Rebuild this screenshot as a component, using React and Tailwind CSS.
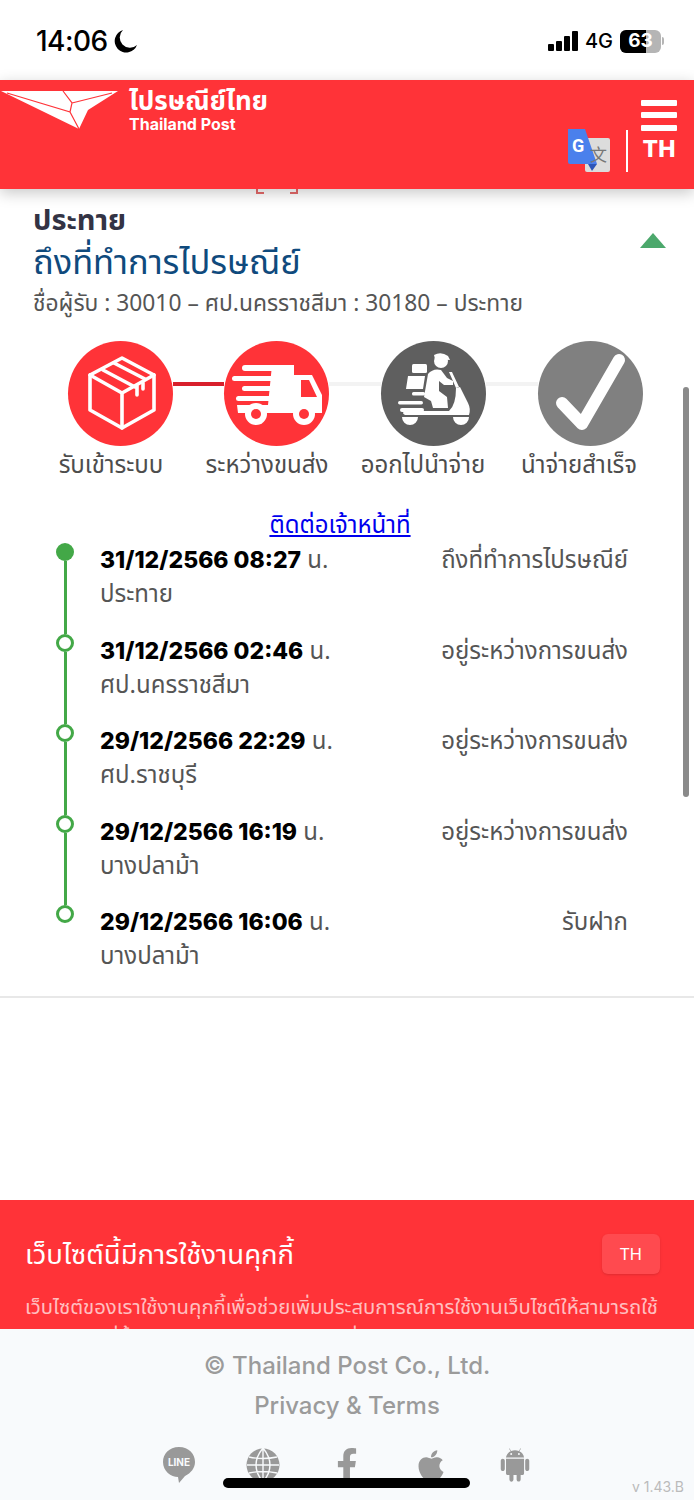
import React from 'react';
import { FaApple, FaFacebookF } from 'react-icons/fa';
import { AiFillAndroid } from 'react-icons/ai';

const StatusBar = () => (
  <div className="h-[80px] flex items-center justify-between pl-[36px] pr-[30px] pt-[2px] bg-white text-black">
    <div className="flex items-center gap-[6px]">
      <span className="text-[28px] font-medium font-['Inter',sans-serif] tracking-[-0.5px]">14:06</span>
      <svg width="24" height="24" viewBox="0 0 24 24"><path d="M9 1 A11.5 11.5 0 1 0 23 16 A10 10 0 0 1 9 1Z" fill="#000" /></svg>
    </div>
    <div className="flex items-center gap-[7px]">
      <div className="flex items-end gap-[2px] h-[20px]">
        <span className="w-[6px] h-[7px] bg-black rounded-[1px]" />
        <span className="w-[6px] h-[10px] bg-black rounded-[1px]" />
        <span className="w-[6px] h-[15px] bg-black rounded-[1px]" />
        <span className="w-[6px] h-[20px] bg-black rounded-[1px]" />
      </div>
      <span className="text-[20px] font-medium font-['Inter',sans-serif] leading-none">4G</span>
      <div className="flex items-center">
        <div className="relative w-[41px] h-[23px] rounded-[6px] bg-[#b5b5b5] overflow-hidden">
          <div className="h-full w-[26px] bg-black" />
          <span className="absolute inset-0 flex items-center justify-center text-white text-[19px] font-bold font-['Inter',sans-serif]">63</span>
        </div>
        <span className="ml-[1px] w-[2px] h-[8px] bg-[#b5b5b5] rounded-r-sm" />
      </div>
    </div>
  </div>
);

const Logo = () => (
  <svg width="120" height="52" viewBox="0 0 120 52" className="shrink-0">
    <path d="M1 11 H118 L88 30 L79 49 Z" fill="#fff" />
    <path d="M7 13 L70 32 L79 49 M63 11 L72 23 L70 32 M72 23 L112 13" stroke="#ff3338" strokeWidth="1.2" fill="none" />
  </svg>
);

const TranslateIcon = () => (
  <svg width="42" height="43" viewBox="0 0 42 43">
    <rect x="17" y="9" width="25" height="34" rx="2" fill="#dcdcdc" />
    <path d="M0 0 H17 L29 35 H2 Q0 35 0 33 Z" fill="#4a80ec" />
    <path d="M20 35 H29 L24 42 Z" fill="#2d55b8" />
    <text x="4" y="23" fontSize="18" fontWeight="700" fill="#fff" fontFamily="Roboto, sans-serif">G</text>
    <text x="22" y="32" fontSize="17" fill="#777" fontFamily="'Noto Sans CJK SC', sans-serif">文</text>
  </svg>
);

const Header = () => (
  <header className="relative z-10 h-[109px] bg-[#ff3338] flex justify-between shadow-[0_4px_14px_rgba(0,0,0,0.22)]">
    <div className="flex items-start">
      <Logo />
      <div className="ml-[9px] pt-[3px] text-white font-bold">
        <div className="text-[26px] leading-[34px]">ไปรษณีย์ไทย</div>
        <div className="text-[16px] leading-[18px] -mt-[2px] font-['Inter',sans-serif]">Thailand Post</div>
      </div>
    </div>
    <div className="flex items-end pb-[17px] pr-[17px]">
      <TranslateIcon />
      <span className="w-[2px] h-[42px] bg-white ml-[16px] mr-[13px]" />
      <div className="flex flex-col items-center w-[36px] mb-[11px]">
        <span className="w-[36px] h-[6px] bg-white rounded-[1px]" />
        <span className="w-[36px] h-[6px] bg-white rounded-[1px] mt-[6px]" />
        <span className="w-[36px] h-[6px] bg-white rounded-[1px] mt-[7px]" />
        <span className="text-white font-extrabold text-[23px] leading-[24px] mt-[6px] font-['Inter',sans-serif]">TH</span>
      </div>
    </div>
  </header>
);

const BoxIcon = () => (
  <svg className="w-full h-full" viewBox="0 0 105 105" fill="none" stroke="#fff" strokeWidth="3.6" strokeLinejoin="round" strokeLinecap="round">
    <path d="M54 17 L86 34 V69 L54 87 L22 69 V34 Z" />
    <path d="M22 34 L54 52 L86 34 M54 52 V87" />
    <path d="M46 22 L77 38 M35 29 L67 46" />
    <path d="M69 45 V54 M75 42 V48" />
  </svg>
);

const TruckIcon = () => (
  <svg className="w-full h-full" viewBox="0 0 105 105" fill="#fff">
    <rect x="18" y="24" width="40" height="6" rx="3" />
    <rect x="8" y="35" width="48" height="5" rx="2.5" />
    <rect x="18" y="45" width="38" height="5" rx="2.5" />
    <rect x="12" y="55" width="40" height="5" rx="2.5" />
    <path fillRule="evenodd" d="M48 24 H70 V34 H88 L98 54 V72 H14 L13 64 H44 Z M77 39 V56 H93 L85 39 Z" />
    <circle cx="32" cy="73" r="11" /><circle cx="32" cy="73" r="5" fill="#ff3338" />
    <circle cx="80" cy="73" r="11" /><circle cx="80" cy="73" r="5" fill="#ff3338" />
  </svg>
);

const ScooterIcon = () => (
  <svg className="w-full h-full" viewBox="0 0 105 105" fill="#fff">
    <circle cx="60" cy="20" r="7" />
    <path d="M53 14 Q60 10 67 15 L69 19 L54 18 Z" />
    <path d="M47 33 Q52 27 60 29 L66 37 L72 40 L72 44 L63 44 L58 40 L58 50 L66 56 L67 67 L52 67 L50 60 L43 56 Z" />
    <path d="M68 31 L71 31 L78 46 L75 47 Z" />
    <rect x="31" y="23" width="15" height="9" rx="1.5" />
    <path d="M27 35 H44 L42 48 H25 Z" />
    <rect x="31" y="51" width="13" height="3.5" rx="1.5" />
    <rect x="17" y="60" width="25" height="3.5" rx="1.7" />
    <rect x="19" y="67" width="24" height="4" rx="2" />
    <path d="M75 47 L79 46 L87 62 Q90 68 88 74 H24 Q20 72 24 70 H58 L68 70 Q75 64 75 47 Z" />
    <path d="M21 76 H37 A8 8 0 0 1 21 76 Z M72 76 H88 A8 8 0 0 1 72 76 Z" />
  </svg>
);

const CheckIcon = () => (
  <svg className="w-full h-full" viewBox="0 0 105 105" fill="none" stroke="#fff" strokeWidth="12" strokeLinecap="round" strokeLinejoin="round">
    <path d="M24 62 L44 83 L81 19" />
  </svg>
);

const Progress = () => (
  <div className="mt-[21px]">
    <div className="flex items-center pl-[68px]">
      <div className="w-[105px] h-[105px] rounded-full bg-[#ff3338]"><BoxIcon /></div>
      <span className="w-[51px] h-[4px] bg-[#d81f2c] -translate-y-[10px]" />
      <div className="w-[105px] h-[105px] rounded-full bg-[#ff3338]"><TruckIcon /></div>
      <span className="w-[52px] h-[4px] bg-[#f3f3f3] -translate-y-[10px]" />
      <div className="w-[105px] h-[105px] rounded-full bg-[#5f5f5f]"><ScooterIcon /></div>
      <span className="w-[52px] h-[4px] bg-[#f3f3f3] -translate-y-[10px]" />
      <div className="w-[105px] h-[105px] rounded-full bg-[#808080]"><CheckIcon /></div>
    </div>
    <div className="flex pl-[33px] mt-[1px] text-[24px] leading-[34px] text-[#4d4d4d] whitespace-nowrap">
      {['รับเข้าระบบ', 'ระหว่างขนส่ง', 'ออกไปนำจ่าย', 'นำจ่ายสำเร็จ'].map((label) => (
        <span key={label} className="w-[156px] text-center">{label}</span>
      ))}
    </div>
  </div>
);

const events = [
  { date: '31/12/2566 08:27', place: 'ประทาย', status: 'ถึงที่ทำการไปรษณีย์' },
  { date: '31/12/2566 02:46', place: 'ศป.นครราชสีมา', status: 'อยู่ระหว่างการขนส่ง' },
  { date: '29/12/2566 22:29', place: 'ศป.ราชบุรี', status: 'อยู่ระหว่างการขนส่ง' },
  { date: '29/12/2566 16:19', place: 'บางปลาม้า', status: 'อยู่ระหว่างการขนส่ง' },
  { date: '29/12/2566 16:06', place: 'บางปลาม้า', status: 'รับฝาก' },
];

const Timeline = () => (
  <div className="pl-[56px] pr-[66px] mt-[4px]">
    {events.map((ev, i) => (
      <div key={ev.date} className="flex h-[90.5px]">
        <div className="w-[18px] flex flex-col items-center shrink-0">
          {i === 0
            ? <span className="w-[18px] h-[18px] rounded-full bg-[#43a847] shrink-0" />
            : <span className="w-[18px] h-[18px] rounded-full border-[3px] border-[#43a847] bg-white shrink-0" />}
          {i < events.length - 1 && <span className="w-[3px] flex-1 bg-[#43a847]" />}
        </div>
        <div className="flex-1 pl-[26px]">
          <div className="flex justify-between text-[24px] leading-[32px] whitespace-nowrap">
            <span className="text-[#555]"><b className="text-black font-extrabold font-['Inter',sans-serif] text-[23px]">{ev.date}</b> น.</span>
            <span className="text-[#555]">{ev.status}</span>
          </div>
          <div className="text-[24px] leading-[33px] text-[#555]">{ev.place}</div>
        </div>
      </div>
    ))}
  </div>
);

const CookieBanner = () => (
  <div className="h-[129px] bg-[#ff3338] overflow-hidden px-[25px] pt-[34px] text-white">
    <div className="flex items-center justify-between pr-[9px]">
      <h2 className="text-[27.5px] leading-[40px]">เว็บไซต์นี้มีการใช้งานคุกกี้</h2>
      <button className="w-[58px] h-[40px] rounded-[6px] bg-[#ff4a4f] shadow-sm text-[17px]">TH</button>
    </div>
    <p className="mt-[16px] text-[20.3px] leading-[32px] text-white/70 whitespace-nowrap">
      เว็บไซต์ของเราใช้งานคุกกี้เพื่อช่วยเพิ่มประสบการณ์การใช้งานเว็บไซต์ให้สามารถใช้
      <br />
      งานได้เต็มที่ขึ้น และทางเราสามารถเรียนรู้ที่จะปรับปรุงเว็บไซต์ให้ตรงกับความต้องการ
    </p>
  </div>
);

const LineIcon = () => (
  <svg width="34" height="38" viewBox="0 0 34 38">
    <path d="M17 1 C7 1 1 8 1 16 C1 25 9 31 16 31 L17 37 L23 30 C29 27 33 22 33 16 C33 8 27 1 17 1Z" fill="#999" />
    <text x="17" y="20" textAnchor="middle" fontSize="10" fontWeight="700" fill="#f8fafc">LINE</text>
  </svg>
);

const GlobeIcon = () => (
  <svg width="34" height="34" viewBox="0 0 34 34">
    <circle cx="17" cy="17" r="16.5" fill="#999" />
    <path d="M17 0 V34 M1 17 H33 M3 9 Q17 12 31 9 M3 25 Q17 22 31 25 M17 0 Q3 17 17 34 M17 0 Q31 17 17 34" stroke="#f8fafc" strokeWidth="1.4" fill="none" />
  </svg>
);

const Footer = () => (
  <footer className="relative h-[171px] bg-[#f8fafc] text-center text-[24px] text-[#9b9b9b] font-['Inter',sans-serif]">
    <div className="pt-[20px] leading-[34px] font-medium">© Thailand Post Co., Ltd.</div>
    <div className="mt-[6px] leading-[34px] font-medium">Privacy &amp; Terms</div>
    <div className="mt-[23px] flex justify-center items-center text-[#999]">
      <div className="w-[84px] flex justify-center"><LineIcon /></div>
      <div className="w-[84px] flex justify-center"><GlobeIcon /></div>
      <div className="w-[84px] flex justify-center"><FaFacebookF size={34} /></div>
      <div className="w-[84px] flex justify-center"><FaApple size={34} /></div>
      <div className="w-[84px] flex justify-center"><AiFillAndroid size={38} /></div>
    </div>
    <span className="absolute right-[10px] bottom-[3px] text-[14px] text-[#bbb]">v 1.43.B</span>
    <span className="absolute left-[223px] bottom-[12px] w-[247px] h-[10px] rounded-full bg-black" />
  </footer>
);

export default function App() {
  return (
    <div className="relative w-[694px] h-[1500px] overflow-hidden bg-white font-['Noto_Sans','Noto_Sans_Thai',sans-serif]">
      <StatusBar />
      <Header />
      <main className="h-[1011px]">
        <div className="flex gap-[26px] h-[5px] pl-[256px]">
          <span className="w-[8px] h-[5px] border-l-2 border-b-2 border-[#e66a6a]" />
          <span className="w-[8px] h-[5px] border-r-2 border-b-2 border-[#e66a6a]" />
        </div>
        <div className="flex items-center justify-between pl-[33px] pr-[28px]">
          <div>
            <div className="text-[29px] leading-[32px] font-bold text-[#333344] mt-[9px]">ประทาย</div>
            <div className="text-[34.4px] leading-[46px] mt-[3px] text-[#0f4a7d]">ถึงที่ทำการไปรษณีย์</div>
            <div className="text-[22.8px] leading-[34px] text-[#555] mt-[2px]">ชื่อผู้รับ : 30010 – ศป.นครราชสีมา : 30180 – ประทาย</div>
          </div>
          <svg width="26" height="15" viewBox="0 0 26 15" className="-mt-[14px] -translate-y-[10px]"><path d="M13 0 L26 15 H0 Z" fill="#4ca86c" /></svg>
        </div>
        <Progress />
        <div className="text-center text-[24px] leading-[30px] mt-[28px] pr-[14px]">
          <a href="#" className="text-[#0000ee] underline">ติดต่อเจ้าหน้าที่</a>
        </div>
        <Timeline />
        <div className="h-[2px] bg-[#e8e8e8]" />
      </main>
      <CookieBanner />
      <Footer />
      <span className="absolute right-[5px] top-[387px] w-[6px] h-[410px] rounded-full bg-[#8a8a8a]" />
    </div>
  );
}
